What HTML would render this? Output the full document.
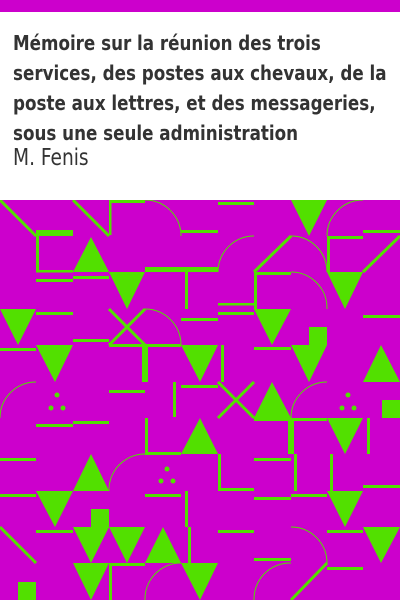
<!DOCTYPE html>
<html><head><meta charset="utf-8"><style>
html,body{margin:0;padding:0;background:#fff;width:400px;height:600px;overflow:hidden}
.top{position:absolute;left:0;top:0;width:400px;height:12px;background:#CC00CC}
.t{position:absolute;left:13px;top:28px;font-family:"DejaVu Sans Condensed","DejaVu Sans",sans-serif;font-weight:bold;font-size:20px;line-height:30px;color:#333;white-space:nowrap;transform:scaleX(0.93);transform-origin:0 0}
.a{position:absolute;left:13px;top:143px;font-family:"DejaVu Sans Condensed","DejaVu Sans",sans-serif;font-size:23px;line-height:30px;color:#333;transform:scaleX(0.9);transform-origin:0 0}
svg{position:absolute;left:0;top:200px}
</style></head><body>
<div class="top"></div>
<div class="t">Mémoire sur la réunion des trois<br>services, des postes aux chevaux, de la<br>poste aux lettres, et des messageries,<br>sous une seule administration</div>
<div class="a">M. Fenis</div>
<svg width="400" height="400" viewBox="0 200 400 400">
<rect x="0" y="200" width="400" height="400" fill="#CC00CC"/>
<g fill="#52E000">
<rect x="36" y="230" width="37" height="6"/><rect x="36" y="236" width="3" height="36"/><rect x="36" y="270" width="37" height="2.5"/><rect x="36" y="279" width="37" height="3"/>
<polygon points="73,272 109,272 91,237"/><rect x="73" y="276" width="36" height="3"/>
<rect x="109" y="200" width="2.5" height="35"/><rect x="109" y="200" width="36" height="3"/>
<rect x="181" y="230" width="37" height="3"/>
<polygon points="109,272 145,272 127,309"/>
<rect x="145" y="267" width="73" height="5"/><rect x="185" y="272" width="3" height="37"/>
<polygon points="0,309 36,309 18,345"/><rect x="36" y="312" width="37" height="3"/>
<rect x="109" y="344" width="72" height="3"/><rect x="73" y="339" width="36" height="3"/><rect x="0" y="348" width="36" height="3"/>
<rect x="142" y="345" width="6" height="37"/>
<polygon points="36,345 73,345 55,382"/><polygon points="181,345 218,345 200,382"/>
<rect x="181" y="385" width="37" height="3"/>
<rect x="218" y="202" width="36" height="3"/><polygon points="291,200 327,200 309,236"/>
<rect x="363" y="230" width="37" height="3"/>
<rect x="254" y="272" width="3" height="37"/><rect x="257" y="272" width="34" height="3"/>
<rect x="327" y="236" width="3" height="36"/><rect x="330" y="236" width="33" height="3"/>
<polygon points="327,272 363,272 345,309"/>
<rect x="218" y="303" width="36" height="2.5"/><rect x="218" y="312" width="36" height="3"/>
<polygon points="254,309 291,309 272,345"/><rect x="363" y="315" width="37" height="3"/><rect x="181" y="318" width="37" height="3"/>
<rect x="309" y="327" width="18" height="18"/><polygon points="291,345 327,345 309,382"/>
<rect x="254" y="347" width="37" height="3"/>
<polygon points="363,382 400,382 381,345"/><rect x="221" y="345" width="3" height="37"/>
<circle cx="57" cy="395" r="2.5"/><circle cx="51" cy="408" r="2.5"/><circle cx="63" cy="408" r="2.5"/>
<rect x="36" y="424" width="37" height="3"/><rect x="73" y="421" width="36" height="3"/><rect x="109" y="390" width="36" height="3"/>
<rect x="173" y="382" width="3" height="35"/>
<rect x="145" y="418" width="3" height="36"/><rect x="145" y="452" width="36" height="3"/>
<polygon points="181,454 218,454 200,418"/>
<rect x="0" y="458" width="36" height="3"/>
<polygon points="73,491 109,491 91,454"/>
<circle cx="167" cy="469" r="2.5"/><circle cx="161" cy="481" r="2.5"/><circle cx="173" cy="481" r="2.5"/>
<rect x="0" y="494" width="36" height="3"/><polygon points="36,491 73,491 55,527"/>
<rect x="145" y="494" width="36" height="3"/><rect x="185" y="491" width="3" height="36"/>
<rect x="91" y="509" width="18" height="18"/>
<polygon points="73,527 109,527 91,563"/><polygon points="109,527 145,527 127,563"/>
<rect x="36" y="530" width="37" height="3"/>
<polygon points="145,563 181,563 163,527"/><rect x="188" y="527" width="3" height="36"/>
<polygon points="73,563 109,563 91,600"/>
<rect x="109" y="563" width="36" height="3"/><rect x="109" y="563" width="3" height="37"/>
<polygon points="181,563 218,563 200,600"/><rect x="18" y="582" width="18" height="18"/>
<polygon points="254,418 291,418 272,382"/><rect x="254" y="418" width="73" height="3"/>
<rect x="288" y="418" width="6" height="36"/>
<circle cx="348" cy="395" r="2.5"/><circle cx="342" cy="408" r="2.5"/><circle cx="354" cy="408" r="2.5"/>
<rect x="382" y="400" width="18" height="18"/>
<polygon points="327,418 363,418 345,454"/><rect x="367" y="418" width="3" height="36"/>
<rect x="218" y="454" width="3" height="37"/><rect x="218" y="488" width="36" height="3"/>
<rect x="254" y="458" width="37" height="3"/><rect x="294" y="454" width="3" height="37"/><rect x="330" y="454" width="3" height="37"/>
<rect x="363" y="485" width="37" height="3"/>
<rect x="254" y="497" width="37" height="3"/><rect x="291" y="494" width="36" height="3"/>
<polygon points="327,491 363,491 345,527"/>
<rect x="218" y="530" width="36" height="3"/><rect x="327" y="530" width="36" height="3"/>
<polygon points="363,527 400,527 381,563"/>
<rect x="254" y="558" width="37" height="3"/><rect x="327" y="567" width="36" height="3"/>
</g>
<g stroke="#52E000" fill="none" stroke-width="3">
<line x1="0" y1="200" x2="36" y2="236"/><line x1="73" y1="200" x2="109" y2="236"/>
<line x1="254" y1="272" x2="291" y2="236"/><line x1="363" y1="272" x2="400" y2="236"/>
<line x1="109" y1="309" x2="145" y2="345"/><line x1="145" y1="309" x2="109" y2="345"/>
<line x1="0" y1="527" x2="36" y2="563"/>
<line x1="218" y1="382" x2="254" y2="418"/><line x1="254" y1="382" x2="218" y2="418"/>
<line x1="291" y1="600" x2="327" y2="563"/>
</g>
<g stroke="#52E000" fill="none" stroke-width="1">
<path d="M145,200 A36,36 0 0 1 181,236"/>
<path d="M218,272 A36,36 0 0 1 254,236"/>
<path d="M327,236 A36,36 0 0 1 363,200"/>
<path d="M291,236 A36,36 0 0 1 327,272"/>
<path d="M291,272 A36,36 0 0 1 327,309"/>
<path d="M145,309 A36,36 0 0 1 181,345"/>
<path d="M0,418 A36,36 0 0 1 36,382"/>
<path d="M291,418 A36,36 0 0 1 327,382"/>
<path d="M109,491 A36,36 0 0 1 145,454"/>
<path d="M145,600 A36,36 0 0 1 181,563"/>
<path d="M291,527 A36,36 0 0 1 327,563"/>
<path d="M254,600 A36,36 0 0 1 291,563"/>
</g>
</svg>
</body></html>
